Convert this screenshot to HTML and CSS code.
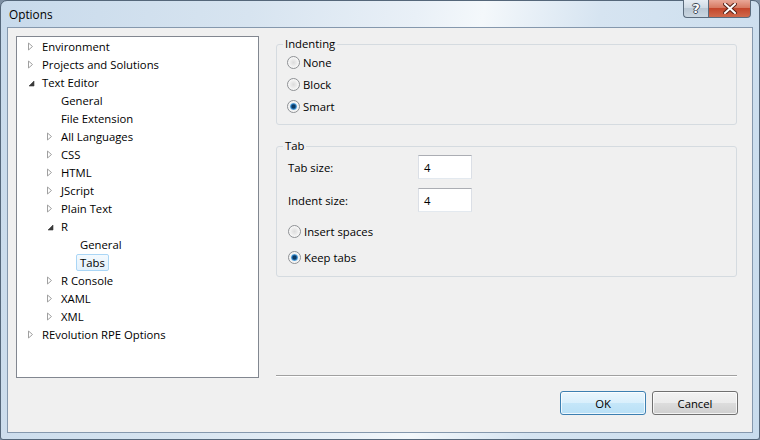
FILE: index.html
```html
<!DOCTYPE html>
<html>
<head>
<meta charset="utf-8">
<link rel="stylesheet" href="styles.css">
</head>
<body>
<div class="window">
  <div class="titlebar">
    <span class="title">Options</span>
    <div class="caption-buttons">
      <div class="cb help">?</div>
      <div class="cb close">
        <svg width="14" height="11" viewBox="0 0 14 11"><path d="M2 1 L12 10 M12 1 L2 10" stroke="#5a2318" stroke-width="4" stroke-linecap="square"/><path d="M2 1 L12 10 M12 1 L2 10" stroke="#fff" stroke-width="2" stroke-linecap="square"/></svg>
      </div>
    </div>
  </div>
  <div class="client">
    <div class="main">
      <div class="tree">
        <div class="row l0"><span class="arrow"><svg width="7" height="9" viewBox="0 0 7 9"><path d="M0.5 1 L4.5 4.5 L0.5 8 Z" fill="#fff" stroke="#a0a0a0"/></svg></span><span class="label">Environment</span></div>
        <div class="row l0"><span class="arrow"><svg width="7" height="9" viewBox="0 0 7 9"><path d="M0.5 1 L4.5 4.5 L0.5 8 Z" fill="#fff" stroke="#a0a0a0"/></svg></span><span class="label">Projects and Solutions</span></div>
        <div class="row l0"><span class="arrow open"><svg width="7" height="9" viewBox="0 0 7 9"><path d="M6 3 L6 8 L1 8 Z" fill="#3a3a3a" stroke="#3a3a3a" stroke-width="0.6"/></svg></span><span class="label">Text Editor</span></div>
        <div class="row l1"><span class="arrow"></span><span class="label">General</span></div>
        <div class="row l1"><span class="arrow"></span><span class="label">File Extension</span></div>
        <div class="row l1"><span class="arrow"><svg width="7" height="9" viewBox="0 0 7 9"><path d="M0.5 1 L4.5 4.5 L0.5 8 Z" fill="#fff" stroke="#a0a0a0"/></svg></span><span class="label">All Languages</span></div>
        <div class="row l1"><span class="arrow"><svg width="7" height="9" viewBox="0 0 7 9"><path d="M0.5 1 L4.5 4.5 L0.5 8 Z" fill="#fff" stroke="#a0a0a0"/></svg></span><span class="label">CSS</span></div>
        <div class="row l1"><span class="arrow"><svg width="7" height="9" viewBox="0 0 7 9"><path d="M0.5 1 L4.5 4.5 L0.5 8 Z" fill="#fff" stroke="#a0a0a0"/></svg></span><span class="label">HTML</span></div>
        <div class="row l1"><span class="arrow"><svg width="7" height="9" viewBox="0 0 7 9"><path d="M0.5 1 L4.5 4.5 L0.5 8 Z" fill="#fff" stroke="#a0a0a0"/></svg></span><span class="label">JScript</span></div>
        <div class="row l1"><span class="arrow"><svg width="7" height="9" viewBox="0 0 7 9"><path d="M0.5 1 L4.5 4.5 L0.5 8 Z" fill="#fff" stroke="#a0a0a0"/></svg></span><span class="label">Plain Text</span></div>
        <div class="row l1"><span class="arrow open"><svg width="7" height="9" viewBox="0 0 7 9"><path d="M6 3 L6 8 L1 8 Z" fill="#3a3a3a" stroke="#3a3a3a" stroke-width="0.6"/></svg></span><span class="label">R</span></div>
        <div class="row l2"><span class="arrow"></span><span class="label">General</span></div>
        <div class="row l2"><span class="arrow"></span><span class="label selected">Tabs</span></div>
        <div class="row l1"><span class="arrow"><svg width="7" height="9" viewBox="0 0 7 9"><path d="M0.5 1 L4.5 4.5 L0.5 8 Z" fill="#fff" stroke="#a0a0a0"/></svg></span><span class="label">R Console</span></div>
        <div class="row l1"><span class="arrow"><svg width="7" height="9" viewBox="0 0 7 9"><path d="M0.5 1 L4.5 4.5 L0.5 8 Z" fill="#fff" stroke="#a0a0a0"/></svg></span><span class="label">XAML</span></div>
        <div class="row l1"><span class="arrow"><svg width="7" height="9" viewBox="0 0 7 9"><path d="M0.5 1 L4.5 4.5 L0.5 8 Z" fill="#fff" stroke="#a0a0a0"/></svg></span><span class="label">XML</span></div>
        <div class="row l0"><span class="arrow"><svg width="7" height="9" viewBox="0 0 7 9"><path d="M0.5 1 L4.5 4.5 L0.5 8 Z" fill="#fff" stroke="#a0a0a0"/></svg></span><span class="label">REvolution RPE Options</span></div>
      </div>
      <div class="pane">
        <fieldset class="group group-indent">
          <legend>Indenting</legend>
          <div class="opt"><span class="radio"></span><span>None</span></div>
          <div class="opt"><span class="radio"></span><span>Block</span></div>
          <div class="opt"><span class="radio on"></span><span>Smart</span></div>
        </fieldset>
        <fieldset class="group group-tab">
          <legend>Tab</legend>
          <div class="field first"><span class="flabel">Tab size:</span><span class="input">4</span></div>
          <div class="field"><span class="flabel">Indent size:</span><span class="input">4</span></div>
          <div class="opt tall first-opt"><span class="radio"></span><span>Insert spaces</span></div>
          <div class="opt tall"><span class="radio on"></span><span>Keep tabs</span></div>
        </fieldset>
        <div class="sep"></div>
      </div>
    </div>
    <div class="buttons">
      <button class="btn default">OK</button>
      <button class="btn">Cancel</button>
    </div>
  </div>
</div>
</body>
</html>
```
FILE: styles.css
```css
html, body {
  margin: 0;
  padding: 0;
}
body {
  background: #7d8fa3;
  font-family: "Open Sans", "Noto Sans", sans-serif;
  font-size: 11.3px;
  color: #000;
}
.window {
  width: 760px;
  height: 440px;
  box-sizing: border-box;
  border: 1px solid #55677a;
  border-radius: 7px 7px 3px 3px;
  background: linear-gradient(100deg, #c8daeb 0%, #d7e4f0 30%, #e9f0f7 50%, #f4f8fb 58%, #d6e4f1 72%, #c9dced 100%);
  display: flex;
  flex-direction: column;
}
.titlebar {
  height: 26px;
  display: flex;
  align-items: center;
  padding-left: 8px;
  padding-right: 8px;
}
.title {
  font-size: 11.8px;
  color: #000;
  margin-top: -1px;
}
.caption-buttons {
  margin-left: auto;
  align-self: flex-start;
  display: flex;
  margin-top: -1px;
}
.cb {
  height: 18px;
  box-sizing: border-box;
  border: 1px solid #5b6b7c;
  border-top: none;
  display: flex;
  align-items: center;
  justify-content: center;
}
.help {
  width: 25px;
  border-radius: 0 0 0 4px;
  border-right: none;
  background: linear-gradient(#e6edf4 0%, #cdd8e3 50%, #b9c7d4 50%, #cbd7e2 100%);
  color: #fff;
  font-family: "DejaVu Sans", sans-serif;
  font-weight: bold;
  font-size: 13px;
  text-shadow: -1px 0 #3d4a57, 1px 0 #3d4a57, 0 -1px #3d4a57, 0 1px #3d4a57;
}
.close {
  width: 43px;
  border-radius: 0 0 4px 0;
  background: linear-gradient(#e9a898 0%, #d77a62 45%, #c4462b 50%, #d06a4c 100%);
}
.client {
  flex: 1;
  margin: 0 6px 6px 6px;
  border: 1px solid #8598ad;
  background: #f0f0f0;
  display: flex;
  flex-direction: column;
  padding: 8px 14px 17px 8px;
}
.main {
  display: flex;
  height: 342px;
}
.tree {
  width: 243px;
  height: 342px;
  box-sizing: border-box;
  border: 1px solid #828790;
  background: #fff;
  padding-top: 0;
}
.row {
  height: 18px;
  display: flex;
  align-items: center;
  white-space: nowrap;
}
.row.l0 { padding-left: 11px; }
.row.l1 { padding-left: 30px; }
.row.l2 { padding-left: 49px; }
.arrow {
  width: 14px;
  height: 18px;
  display: flex;
  align-items: center;
  flex-shrink: 0;
}
.arrow.open {
  padding-top: 1px;
  box-sizing: border-box;
}
.arrow svg {
  display: block;
}
.label {
  line-height: 15px;
}
.label.selected {
  margin-left: -4px;
  padding: 0 3px;
  border: 1px solid #aad6f6;
  border-radius: 2px;
  background: linear-gradient(#f3f9fe, #e3f1fc);
}
.pane {
  width: 461px;
  margin-left: 17px;
  display: flex;
  flex-direction: column;
}
.group {
  margin: 0;
  border: 1px solid #d5dbe0;
  border-radius: 3px;
  padding: 0 6px;
  min-width: 0;
}
.group legend {
  padding: 0 2px;
  margin-left: 0;
  line-height: 14px;
}
.group-indent {
  margin-top: 1px;
  padding-bottom: 7px;
}
.group-tab {
  margin-top: 14px;
  padding-bottom: 6px;
}
.opt {
  height: 22px;
  display: flex;
  align-items: center;
  padding-left: 4px;
}
.opt.tall {
  height: 26px;
  padding-left: 5px;
}
.opt.first-opt {
  margin-top: 6px;
}
.radio {
  width: 13px;
  height: 13px;
  box-sizing: border-box;
  border-radius: 50%;
  border: 1px solid #8e9194;
  background: radial-gradient(circle at 50% 50%, #dcdcdc 0, #eeeeee 45%, #fbfbfb 75%, #d0d0d0 100%);
  display: inline-flex;
  align-items: center;
  justify-content: center;
  margin-right: 3px;
  flex-shrink: 0;
}
.radio.on::after {
  content: "";
  width: 7px;
  height: 7px;
  border-radius: 50%;
  background: radial-gradient(circle, #0c3a63 0, #0c3a63 1.5px, #2c7cc0 2.6px, #7fc2ef 3.5px);
}
.field {
  display: grid;
  grid-template-columns: 130px 54px;
  align-items: center;
  padding-left: 5px;
  margin-top: 9px;
}
.field.first {
  margin-top: 2px;
}
.input {
  height: 24px;
  box-sizing: border-box;
  border: 1px solid #abadb3;
  border-left-color: #dbdfe6;
  border-right-color: #dbdfe6;
  border-bottom-color: #e3e9ef;
  background: #fff;
  display: flex;
  align-items: center;
  padding-left: 5px;
}
.sep {
  margin-top: auto;
  margin-bottom: 1px;
  border-top: 1px solid #a0a0a0;
  border-bottom: 1px solid #fff;
}
.buttons {
  margin-top: 13px;
  display: flex;
  justify-content: flex-end;
  gap: 6px;
}
.btn {
  width: 86px;
  height: 24px;
  box-sizing: border-box;
  font-family: inherit;
  font-size: 11.3px;
  color: #000;
  border: 1px solid #707070;
  border-radius: 3px;
  background: linear-gradient(#f2f2f2 0%, #ebebeb 50%, #dddddd 50%, #cfcfcf 100%);
  box-shadow: inset 0 0 0 1px rgba(255, 255, 255, 0.75);
  padding: 0;
  margin: 0;
}
.btn.default {
  border-color: #3c7fb1;
  background: linear-gradient(#eaf6fd 0%, #d9effc 50%, #c5e6f9 50%, #b9e0f6 100%);
}
```
